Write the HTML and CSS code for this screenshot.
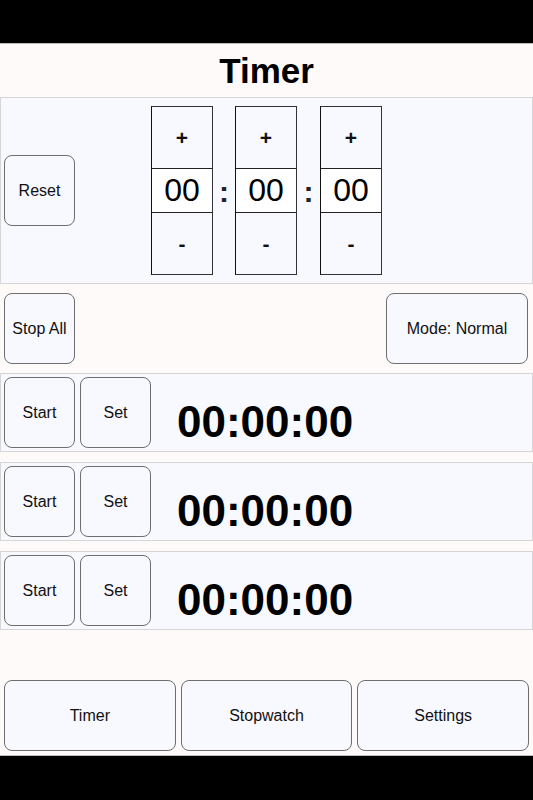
FILE: index.html
```html
<!DOCTYPE html>
<html>
<head>
<meta charset="utf-8">
<title>Timer</title>
<link rel="stylesheet" href="styles.css">
</head>
<body>
<div class="bar-top"></div>
<div class="app">
  <h1 class="title">Timer</h1>
  <section class="setter">
    <button class="btn square">Reset</button>
    <div class="spinners">
      <div class="spin">
        <button class="spin-btn">+</button>
        <div class="spin-val">00</div>
        <button class="spin-btn">-</button>
      </div>
      <span class="colon">:</span>
      <div class="spin">
        <button class="spin-btn">+</button>
        <div class="spin-val">00</div>
        <button class="spin-btn">-</button>
      </div>
      <span class="colon">:</span>
      <div class="spin">
        <button class="spin-btn">+</button>
        <div class="spin-val">00</div>
        <button class="spin-btn">-</button>
      </div>
    </div>
  </section>
  <div class="controls">
    <button class="btn square">Stop All</button>
    <button class="btn mode">Mode: Normal</button>
  </div>
  <div class="timers">
    <div class="timer-row">
      <button class="btn square">Start</button>
      <button class="btn square">Set</button>
      <span class="time">00:00:00</span>
    </div>
    <div class="timer-row">
      <button class="btn square">Start</button>
      <button class="btn square">Set</button>
      <span class="time">00:00:00</span>
    </div>
    <div class="timer-row">
      <button class="btn square">Start</button>
      <button class="btn square">Set</button>
      <span class="time">00:00:00</span>
    </div>
  </div>
  <div class="spacer"></div>
  <nav class="nav">
    <button class="btn nav-btn">Timer</button>
    <button class="btn nav-btn">Stopwatch</button>
    <button class="btn nav-btn">Settings</button>
  </nav>
</div>
<div class="bar-bottom"></div>
</body>
</html>
```
FILE: styles.css
```css
* { box-sizing: border-box; }
html, body {
  margin: 0;
  padding: 0;
  background: #000;
  font-family: "Liberation Sans", Arial, sans-serif;
  color: #111;
}
.bar-top { height: 44px; background: #000; border-bottom: 1px solid #bbb; }
.bar-bottom { height: 45px; background: #000; border-top: 1px solid #bbb; }
.app {
  height: 711px;
  background: #fffafa;
  display: flex;
  flex-direction: column;
}
.title {
  margin: 0;
  height: 53px;
  display: flex;
  align-items: center;
  justify-content: center;
  font-size: 35px;
  font-weight: bold;
  color: #000;
}
.btn {
  font-family: "Liberation Sans", Arial, sans-serif;
  font-size: 16px;
  color: #111;
  background: #f8f8ff;
  border: 1px solid #6e6e6e;
  border-radius: 8px;
  padding: 0;
  margin: 0;
}
.square { width: 71px; height: 71px; flex: none; }
.setter {
  height: 187px;
  border: 1px solid #d6d6d6;
  background: #f8f8ff;
  display: flex;
  align-items: center;
  padding-left: 3px;
}
.spinners {
  display: flex;
  align-items: center;
  margin-left: 76px;
}
.spin {
  width: 62px;
  display: flex;
  flex-direction: column;
  border: 1px solid #333;
  border-left-color: #111;
}
.spin-btn {
  height: 61px;
  background: #f8f8ff;
  border: none;
  font-family: "Liberation Sans", Arial, sans-serif;
  font-size: 21px;
  font-weight: bold;
  color: #111;
  padding: 0;
}
.spin-val {
  height: 45px;
  background: #fff;
  border-top: 1px solid #222;
  border-bottom: 1px solid #222;
  display: flex;
  align-items: center;
  justify-content: center;
  font-size: 32px;
  color: #000;
}
.colon {
  width: 22px;
  text-align: center;
  font-size: 30px;
  font-weight: bold;
  color: #222;
  margin-top: 2px;
}
.spin + .colon + .spin + .colon { width: 23px; }
.controls {
  height: 89px;
  display: flex;
  align-items: center;
  justify-content: space-between;
  padding: 0 5px 0 4px;
}
.mode { width: 142px; height: 71px; }
.timers {
  display: flex;
  flex-direction: column;
  gap: 10px;
}
.timer-row {
  height: 79px;
  border: 1px solid #d6d6d6;
  background: #f8f8ff;
  display: flex;
  align-items: center;
  gap: 5px;
  padding-left: 3px;
}
.time {
  margin-left: 21px;
  padding-top: 19px;
  font-size: 44px;
  font-weight: bold;
  color: #000;
}
.spacer { flex: 1; }
.nav {
  display: flex;
  gap: 5px;
  padding: 0 4px 4px 4px;
}
.nav-btn { flex: 1; height: 71px; }
```
